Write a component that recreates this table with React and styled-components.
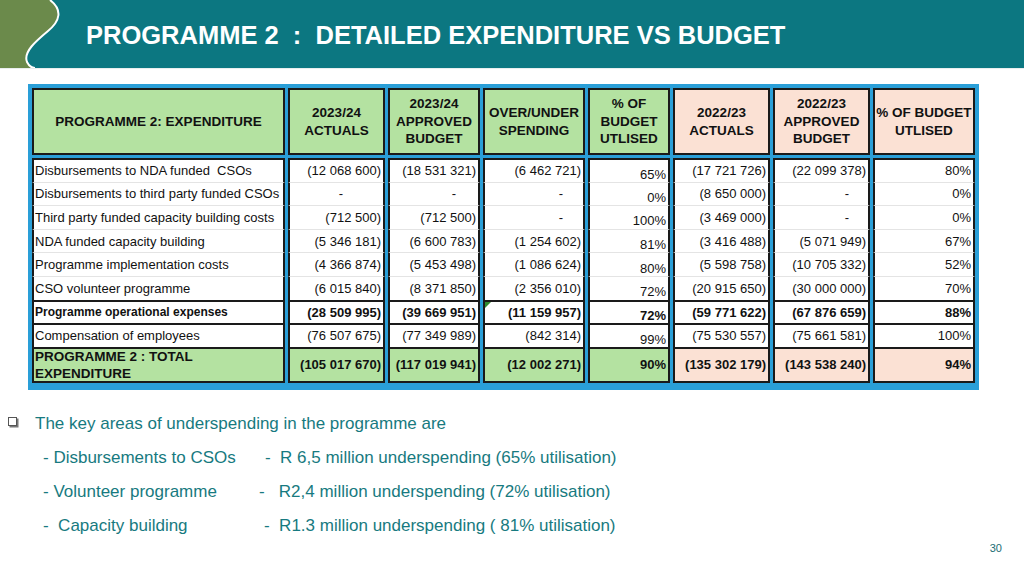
import React from "react";
import styled, { createGlobalStyle } from "styled-components";

const rows = [
  ["Disbursements to NDA funded  CSOs", "(12 068 600)", "(18 531 321)", "(6 462 721)", "65%", "(17 721 726)", "(22 099 378)", "80%"],
  ["Disbursements to third party funded CSOs", "-", "-", "-", "0%", "(8 650 000)", "-", "0%"],
  ["Third party funded capacity building costs", "(712 500)", "(712 500)", "-", "100%", "(3 469 000)", "-", "0%"],
  ["NDA funded capacity building", "(5 346 181)", "(6 600 783)", "(1 254 602)", "81%", "(3 416 488)", "(5 071 949)", "67%"],
  ["Programme implementation costs", "(4 366 874)", "(5 453 498)", "(1 086 624)", "80%", "(5 598 758)", "(10 705 332)", "52%"],
  ["CSO volunteer programme", "(6 015 840)", "(8 371 850)", "(2 356 010)", "72%", "(20 915 650)", "(30 000 000)", "70%"],
  ["Programme operational expenses", "(28 509 995)", "(39 669 951)", "(11 159 957)", "72%", "(59 771 622)", "(67 876 659)", "88%"],
  ["Compensation of employees", "(76 507 675)", "(77 349 989)", "(842 314)", "99%", "(75 530 557)", "(75 661 581)", "100%"],
];

const total = ["PROGRAMME 2 : TOTAL EXPENDITURE", "(105 017 670)", "(117 019 941)", "(12 002 271)", "90%", "(135 302 179)", "(143 538 240)", "94%"];

const headers = [
  ["PROGRAMME 2: EXPENDITURE"],
  ["2023/24", "ACTUALS"],
  ["2023/24", "APPROVED", "BUDGET"],
  ["OVER/UNDER", "SPENDING"],
  ["% OF", "BUDGET", "UTLISED"],
  ["2022/23", "ACTUALS"],
  ["2022/23", "APPROVED", "BUDGET"],
  ["% OF BUDGET", "UTLISED"],
];

// right padding for the accounting dash in each column
const dashPad = [0, 40, 22, 20, 0, 0, 19, 0];

const notes = [
  ["- Disbursements to CSOs", "-  R 6,5 million underspending (65% utilisation)", 0],
  ["- Volunteer programme", "-   R2,4 million underspending (72% utilisation)", -6],
  ["-  Capacity building", "-  R1.3 million underspending ( 81% utilisation)", -1],
];

export default function App() {
  return (
    <>
      <Global />
      <Slide>
        <TitleBar>
          <Swoosh width="70" height="68" viewBox="0 0 70 68">
            <path d="M0 0 H50 C63 10 60 21 48 31 C36 41 23 52 27 62 C29 66 32 68 35 68 H0 Z" fill="#6b8a4b" />
            <path d="M50 0 C63 10 60 21 48 31 C36 41 23 52 27 62 C29 66 32 68 35 68" fill="none" stroke="#fff" strokeWidth="2" />
          </Swoosh>
          <Title>PROGRAMME 2  :  DETAILED EXPENDITURE VS BUDGET</Title>
        </TitleBar>

        <Frame>
          <Grid>
            {headers.map((lines, i) => (
              <HeadCell key={i} $tone={i < 5 ? "green" : "peach"}>
                {lines.map((l) => (
                  <div key={l}>{l}</div>
                ))}
              </HeadCell>
            ))}

            {rows.map((row, r) =>
              row.map((v, c) => (
                <Cell
                  key={r + "-" + c}
                  $align={c === 0 ? "left" : "right"}
                  $bold={r === 6}
                  $edge={r === 0 ? "first" : r === 6 || r === 7 ? "rule" : "plain"}
                  $low={c === 4}
                  $pad={v === "-" ? dashPad[c] : 2}
                  $mark={r === 6 && c === 3}
                  $small={r === 6}
                >
                  {v}
                </Cell>
              ))
            )}

            {total.map((v, c) => (
              <Cell
                key={"t" + c}
                $align={c === 0 ? "left" : "right"}
                $bold
                $edge="total"
                $tone={c < 5 ? "green" : "peach"}
              >
                {c === 0 ? (
                  <TotalLabel>
                    PROGRAMME 2 : TOTAL
                    <br />
                    EXPENDITURE
                  </TotalLabel>
                ) : (
                  v
                )}
              </Cell>
            ))}
          </Grid>
        </Frame>

        <Bottom>
          <Notes>
            <Lead>
              <Box />
              <span>The key areas of underspending in the programme are</span>
            </Lead>
            {notes.map(([a, b, shift]) => (
              <NoteRow key={a}>
                <span>{a}</span>
                <NoteValue $shift={shift}>{b}</NoteValue>
              </NoteRow>
            ))}
          </Notes>
          <PageNum>30</PageNum>
        </Bottom>
      </Slide>
    </>
  );
}

/* STYLES */
const Global = createGlobalStyle`
  body {
    margin: 0;
    background: #fff;
    font-family: "Liberation Sans", Arial, sans-serif;
  }
`;

const Slide = styled.div`
  width: 1024px;
  height: 575px;
  overflow: hidden;
  display: flex;
  flex-direction: column;
  background: #fff;
`;

const TitleBar = styled.div`
  height: 68px;
  flex-shrink: 0;
  display: flex;
  align-items: center;
  background: #0c7781;
  border-bottom: 1px solid #e9eeee;
`;

const Swoosh = styled.svg`
  display: block;
  flex-shrink: 0;
`;

const Title = styled.h1`
  margin: 3px 0 0 16px;
  color: #fff;
  font-size: 25.5px;
  font-weight: bold;
  white-space: pre;
`;

const Frame = styled.div`
  align-self: flex-start;
  margin: 15px 0 0 28px;
  padding: 4px 4px 7px 4px;
  background: #2a9fd8;
`;

const Grid = styled.div`
  display: grid;
  grid-template-columns: 253px 97px 92px 102px 82px 97px 97px 102px;
  column-gap: 3px;
  font-size: 13px;
  color: #111;
`;

const tones = { green: "#b4e2a1", peach: "#fbe1d4" };

const HeadCell = styled.div`
  height: 67px;
  box-sizing: border-box;
  border: 2px solid #1a1a1a;
  background: ${(p) => tones[p.$tone]};
  display: flex;
  flex-direction: column;
  align-items: center;
  justify-content: center;
  text-align: center;
  font-weight: bold;
  font-size: 13.5px;
  line-height: 17.5px;
  margin-bottom: 3px;
`;

const Cell = styled.div`
  position: relative;
  display: flex;
  align-items: center;
  justify-content: ${(p) => (p.$align === "left" ? "flex-start" : "flex-end")};
  height: ${(p) => (p.$edge === "total" ? "36px" : "23.6px")};
  box-sizing: border-box;
  padding: ${(p) => (p.$low ? "7px" : "0")} ${(p) => (p.$align === "left" ? 0 : p.$pad ?? 2)}px 0
    ${(p) => (p.$align === "left" ? 1 : 0)}px;
  border-left: 2px solid #1a1a1a;
  border-right: 2px solid #1a1a1a;
  border-top: ${(p) => (p.$edge === "plain" ? "1px solid #e4e4e4" : "2px solid #1a1a1a")};
  border-bottom: ${(p) => (p.$edge === "total" ? "2px solid #1a1a1a" : "none")};
  background: ${(p) => (p.$tone ? tones[p.$tone] : "#fff")};
  font-weight: ${(p) => (p.$bold ? "bold" : "normal")};
  font-size: ${(p) => (p.$small && p.$align === "left" ? "12px" : "13px")};
  white-space: pre;

  ${(p) =>
    p.$mark &&
    `&::before {
      content: "";
      position: absolute;
      left: 0;
      top: 0;
      border-top: 6px solid #2e8b2e;
      border-right: 6px solid transparent;
    }`}
`;

const TotalLabel = styled.div`
  font-size: 13.5px;
  line-height: 17px;
  white-space: normal;
`;

const Bottom = styled.div`
  display: flex;
  align-items: flex-end;
`;

const Notes = styled.div`
  flex: 1;
  margin-top: 17px;
  padding-bottom: 11px;
  color: #177a80;
  font-size: 17px;
`;

const Lead = styled.div`
  display: flex;
  align-items: center;
  height: 34px;
  gap: 18px;
  padding-left: 8px;
`;

const Box = styled.span`
  width: 7px;
  height: 7px;
  border: 1px solid #555;
  box-shadow: 1.5px 1.5px 0 #777;
  background: #fff;
  flex-shrink: 0;
  margin-top: -4px;
`;

const NoteRow = styled.div`
  display: grid;
  grid-template-columns: 222px auto;
  align-items: center;
  height: 34.3px;
  padding-left: 43px;
  white-space: pre;
`;

const NoteValue = styled.span`
  margin-left: ${(p) => p.$shift}px;
`;

const PageNum = styled.div`
  padding: 0 22px 0 0;
  font-size: 11px;
  line-height: 14px;
  color: #1b6d73;
`;
